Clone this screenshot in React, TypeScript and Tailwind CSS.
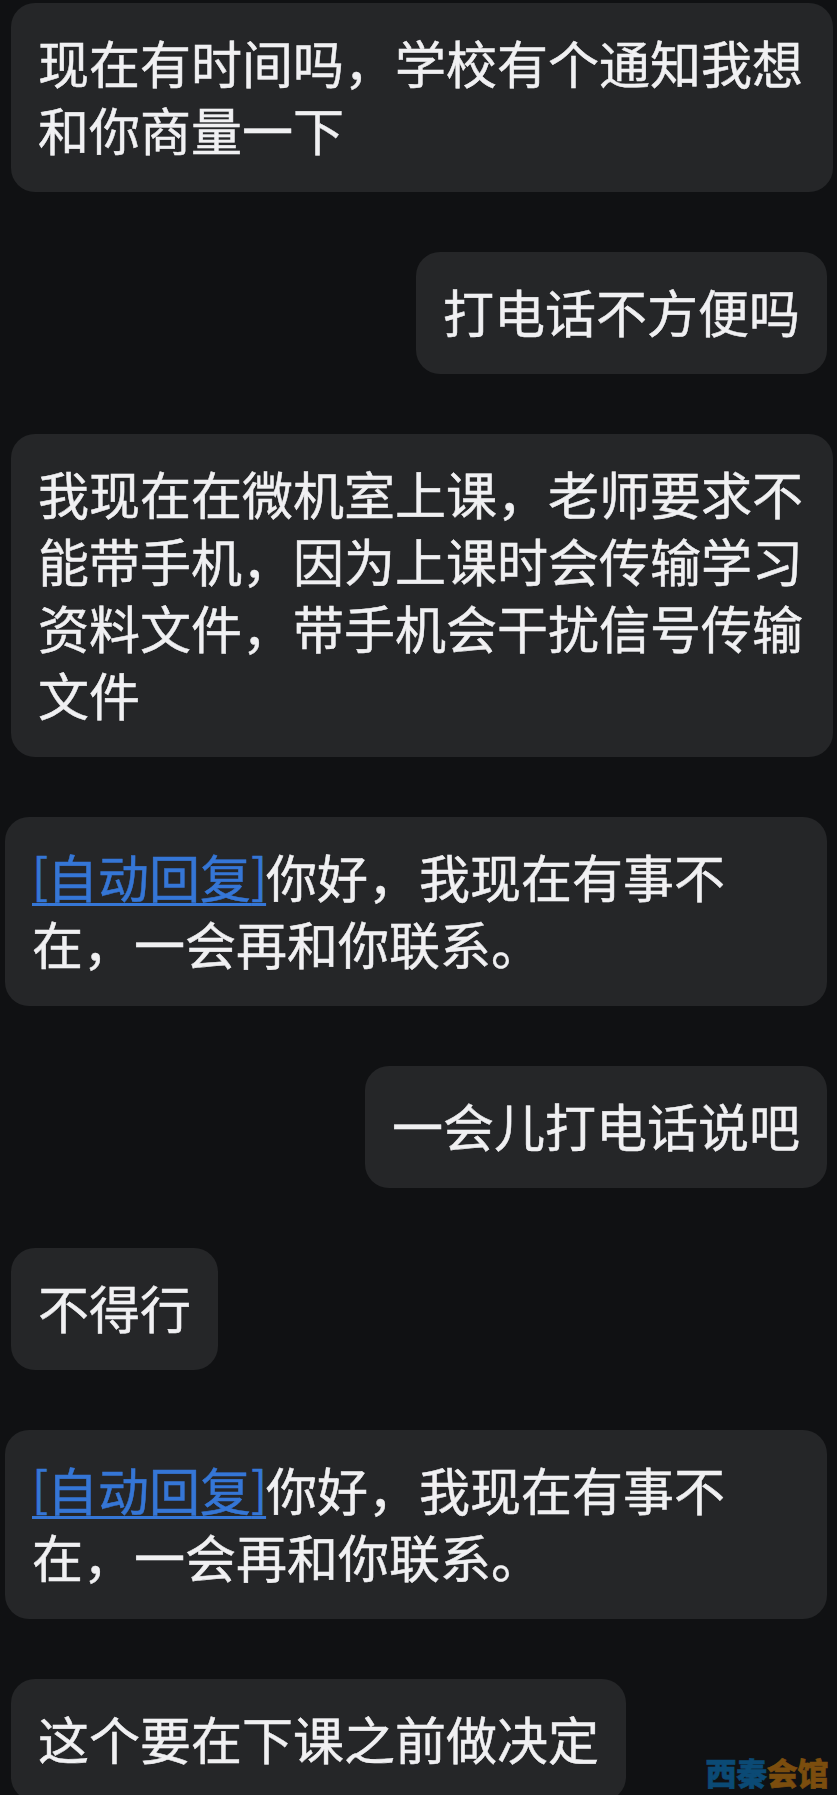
import clsx from "clsx";

type Message = {
  id: number;
  from: "them" | "me";
  auto?: boolean;
  wide?: boolean;
  text: string;
};

const AUTO_REPLY = "你好，我现在有事不\n在，一会再和你联系。";

const messages: Message[] = [
  { id: 1, from: "them", wide: true, text: "现在有时间吗，学校有个通知我想\n和你商量一下" },
  { id: 2, from: "me", text: "打电话不方便吗" },
  {
    id: 3,
    from: "them",
    wide: true,
    text: "我现在在微机室上课，老师要求不\n能带手机，因为上课时会传输学习\n资料文件，带手机会干扰信号传输\n文件",
  },
  { id: 4, from: "me", auto: true, wide: true, text: AUTO_REPLY },
  { id: 5, from: "me", text: "一会儿打电话说吧" },
  { id: 6, from: "them", text: "不得行" },
  { id: 7, from: "me", auto: true, wide: true, text: AUTO_REPLY },
  { id: 8, from: "them", text: "这个要在下课之前做决定" },
];

function AutoReplyTag() {
  return (
    <a className="text-[#3576d6] underline decoration-[3px] underline-offset-[5px] [text-decoration-skip-ink:none]">
      <span className="align-[4px] text-[48px] leading-none tracking-[-1.2px]">[</span>
      自动回复
      <span className="align-[4px] text-[48px] leading-none tracking-[-1.2px]">]</span>
    </a>
  );
}

function Bubble({ message }: { message: Message }) {
  return (
    <div
      className={clsx(
        "shrink-0 rounded-[24px] bg-[#252628] pl-[27px] pt-[26px] pb-[29px]",
        message.from === "me" ? "mr-[10px] self-end" : "ml-[11px] self-start",
        message.wide ? "w-[822px]" : "pr-[27px]"
      )}
    >
      <p className="whitespace-pre text-[51px] leading-[67px] text-[#f0f0f2] [-webkit-text-stroke:0.5px]">
        {message.auto && <AutoReplyTag />}
        {message.text}
      </p>
    </div>
  );
}

export default function App() {
  return (
    <main className="relative flex h-[1795px] w-[837px] flex-col gap-[60px] overflow-hidden bg-[#101113] pt-[3px] font-['Noto_Sans_CJK_SC',sans-serif]">
      {messages.map((m) => (
        <Bubble key={m.id} message={m} />
      ))}

      {/* Site watermark */}
      <div className="absolute bottom-[8px] right-[9px] whitespace-nowrap text-[31px] leading-[31px] font-black tracking-[-0.4px] [-webkit-text-stroke:0.6px]">
        <span className="text-[#0b4a75]">西秦</span>
        <span className="text-[#7b4d0e]">会馆</span>
      </div>
    </main>
  );
}
